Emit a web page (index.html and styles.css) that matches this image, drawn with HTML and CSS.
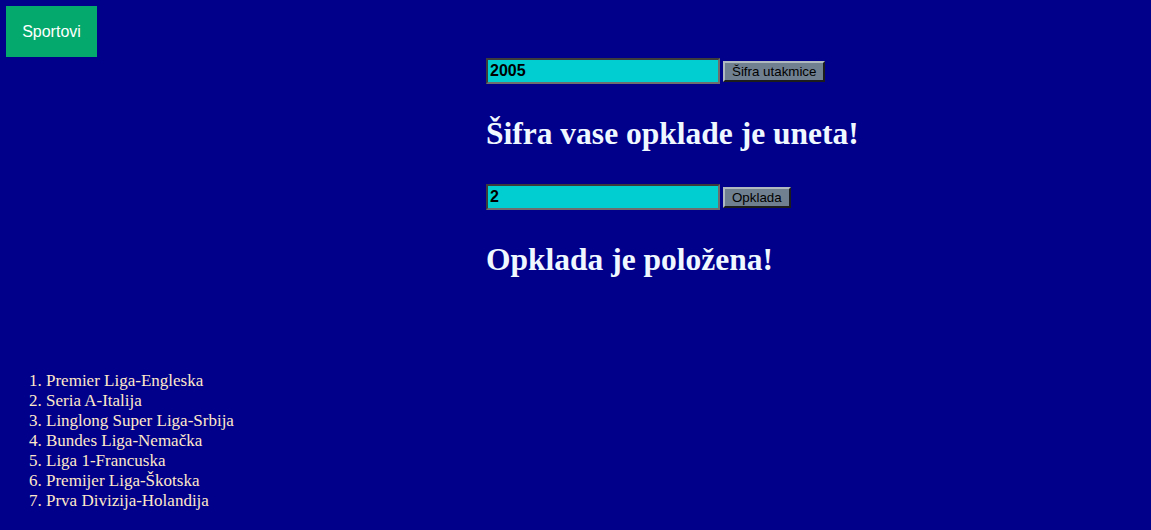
FILE: index.html
```html
<!DOCTYPE html>
<html lang="sr">
<head>
<meta charset="utf-8">
<title>Opklade</title>
<link rel="stylesheet" href="styles.css">
</head>
<body>
<div class="page">
  <div class="left">
    <button class="dropbtn">Sportovi</button>
    <ol class="lige">
      <li>Premier Liga-Engleska</li>
      <li>Seria A-Italija</li>
      <li>Linglong Super Liga-Srbija</li>
      <li>Bundes Liga-Nemačka</li>
      <li>Liga 1-Francuska</li>
      <li>Premijer Liga-Škotska</li>
      <li>Prva Divizija-Holandija</li>
    </ol>
  </div>
  <div class="right">
    <form class="row">
      <input class="field" type="text" value="2005">
      <button class="btn" type="button">Šifra utakmice</button>
    </form>
    <h1 class="msg msg-first">Šifra vase opklade je uneta!</h1>
    <form class="row">
      <input class="field" type="text" value="2">
      <button class="btn" type="button">Opklada</button>
    </form>
    <h1 class="msg msg-second">Opklada je položena!</h1>
  </div>
</div>
</body>
</html>
```
FILE: styles.css
```css
html, body {
  margin: 0;
  padding: 0;
}
body {
  background: #00008b;
  font-family: "Liberation Serif", "Times New Roman", serif;
  color: #f0f8ff;
  width: 1151px;
  height: 530px;
  overflow: hidden;
}
.page {
  display: flex;
  align-items: flex-start;
}
.left {
  width: 480px;
  padding: 6px 0 0 6px;
  display: flex;
  flex-direction: column;
  align-items: flex-start;
}
.dropbtn {
  background: #04aa6d;
  color: #ffffff;
  font-family: "Liberation Sans", Arial, sans-serif;
  font-size: 16px;
  border: none;
  width: 91px;
  height: 51px;
  padding: 0;
  margin: 0;
}
.lige {
  margin: 314px 0 0 0;
  padding-left: 40px;
  color: #ffe8c8;
  font-size: 17px;
  line-height: 20px;
}
.right {
  padding-top: 58px;
  display: flex;
  flex-direction: column;
  align-items: flex-start;
}
.row {
  display: flex;
  align-items: center;
  gap: 3px;
  margin: 0;
}
.field {
  box-sizing: border-box;
  width: 234px;
  height: 26px;
  margin: 0;
  padding: 1px 2px;
  background: #00ced1;
  color: #000000;
  font-family: "Liberation Sans", Arial, sans-serif;
  font-weight: bold;
  font-size: 16px;
  border: 2px solid;
  border-color: #3c3c3c #6e6e6e #6e6e6e #3c3c3c;
  outline: none;
}
.btn {
  box-sizing: border-box;
  height: 21px;
  margin: 0;
  padding: 1px 7px;
  background: #708090;
  color: #000000;
  font-family: "Liberation Sans", Arial, sans-serif;
  font-size: 13.333px;
  border: 2px solid;
  border-color: #b0b8c0 #1c1c1c #1c1c1c #b0b8c0;
}
.msg {
  margin: 0;
  font-size: 31.5px;
  font-weight: bold;
  color: #f0f8ff;
  line-height: 37px;
}
.msg-first {
  margin: 31px 0 32px 0;
}
.msg-second {
  margin: 31px 0 0 0;
}
```
